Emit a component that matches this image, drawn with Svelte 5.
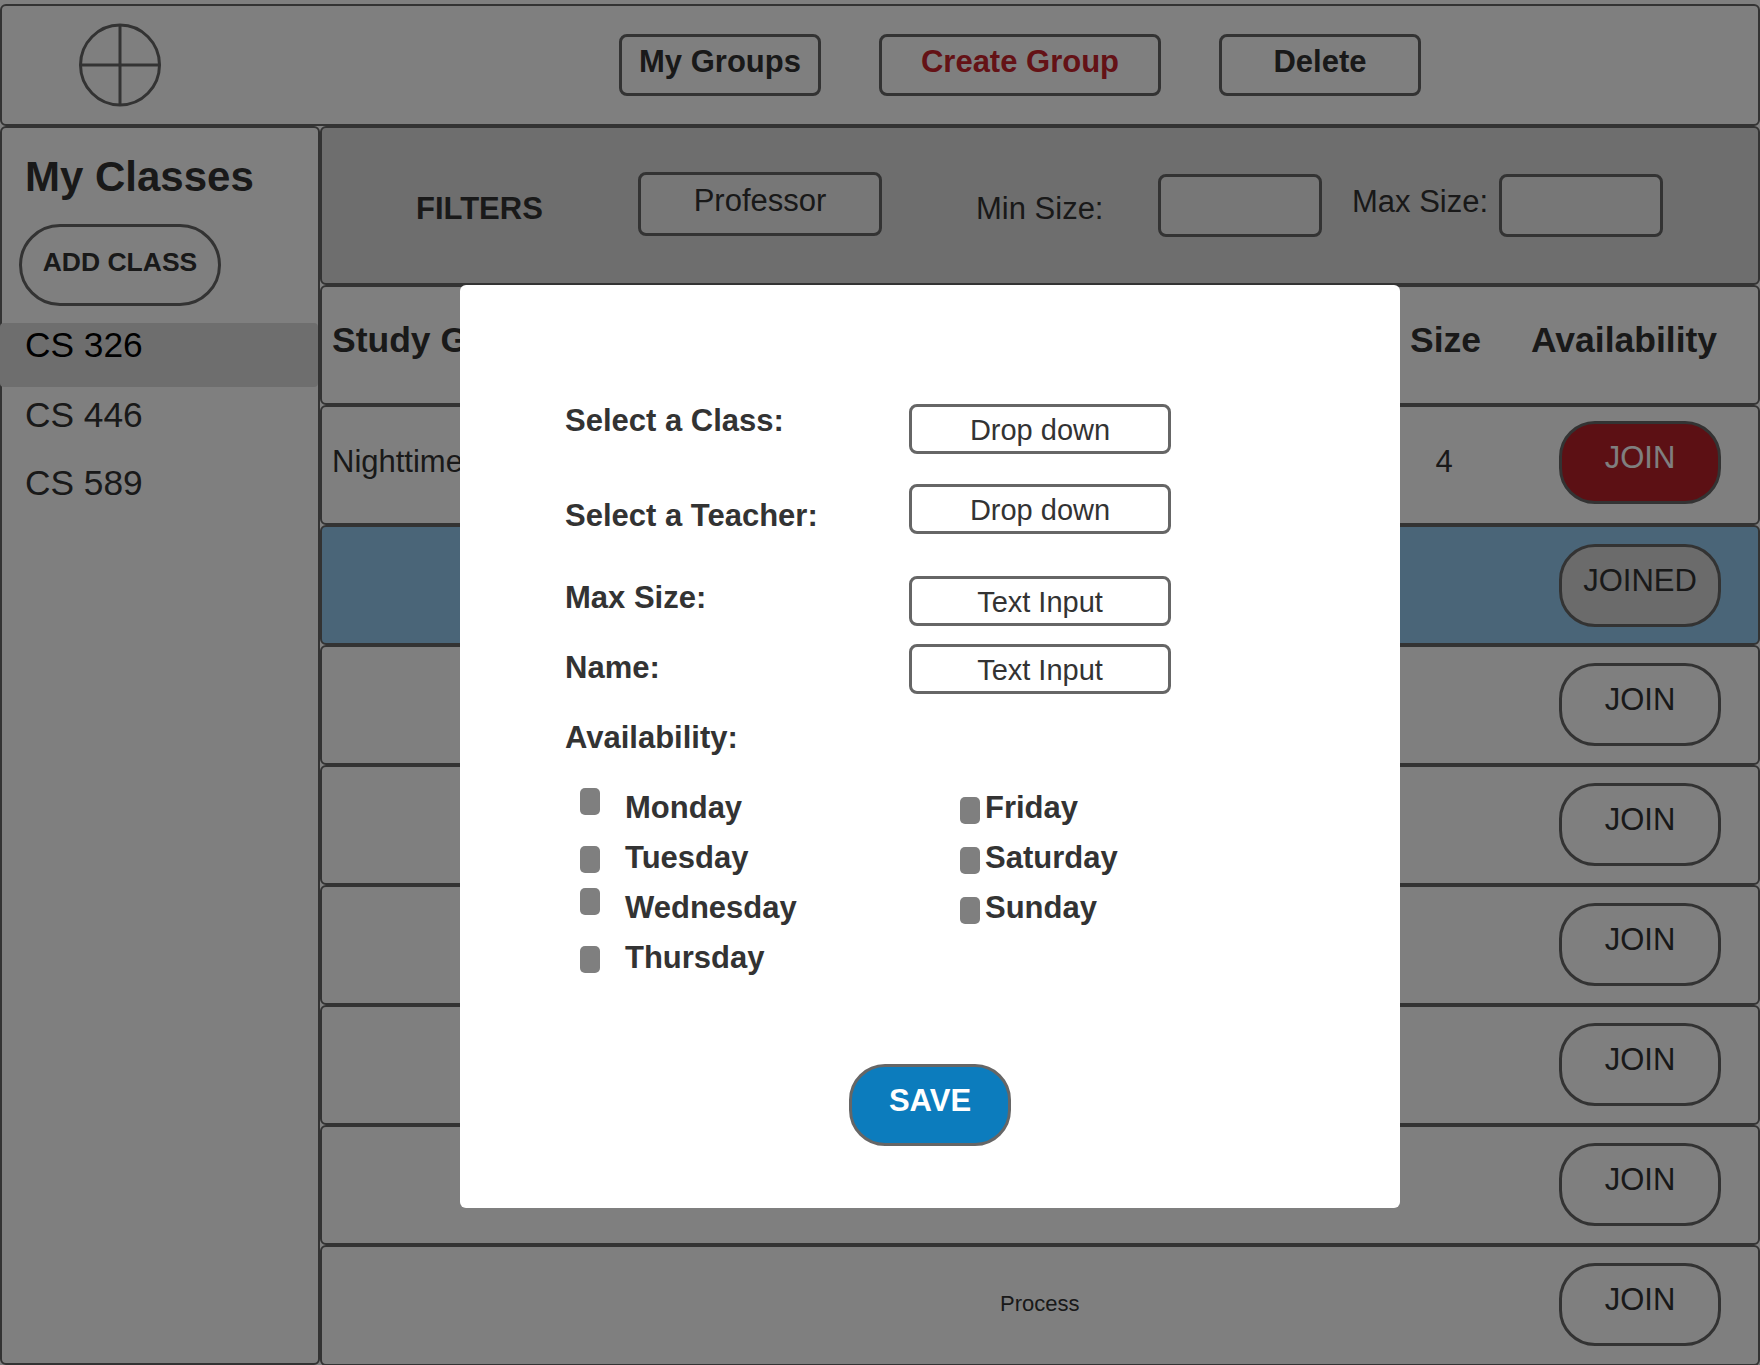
<script>
  const rows = [
    { name: 'Nighttime', size: '4', btn: 'JOIN', kind: 'first' },
    { name: '', size: '', btn: 'JOINED', kind: 'joined' },
    { name: '', size: '', btn: 'JOIN', kind: '' },
    { name: '', size: '', btn: 'JOIN', kind: '' },
    { name: '', size: '', btn: 'JOIN', kind: '' },
    { name: '', size: '', btn: 'JOIN', kind: '' },
    { name: '', size: '', btn: 'JOIN', kind: '' },
    { name: 'Process', size: '', btn: 'JOIN', kind: 'last' }
  ];
  const leftDays = [
    { d: 'Monday', c: 'up' },
    { d: 'Tuesday', c: 'down' },
    { d: 'Wednesday', c: 'up' },
    { d: 'Thursday', c: 'down' }
  ];
  const rightDays = ['Friday', 'Saturday', 'Sunday'];
</script>

<div class="page">
  <header class="topbar box">
    <svg class="logo" viewBox="0 0 82 84" width="82" height="84" aria-hidden="true">
      <ellipse cx="41" cy="42" rx="39.5" ry="40" fill="none" stroke="#666" stroke-width="3" />
      <path d="M41 2V82M2 42H80" fill="none" stroke="#666" stroke-width="3" />
    </svg>
    <div class="nav">
      <button class="navbtn w202">My Groups</button>
      <button class="navbtn w282 red">Create Group</button>
      <button class="navbtn w202">Delete</button>
    </div>
  </header>

  <div class="body">
    <aside class="sidebar box">
      <h1>My Classes</h1>
      <button class="add">ADD CLASS</button>
      <ul>
        <li class="active">CS 326</li>
        <li class="c2">CS 446</li>
        <li class="c3">CS 589</li>
      </ul>
    </aside>

    <main>
      <section class="filters box">
        <strong class="flabel">FILTERS</strong>
        <div class="prof">Professor</div>
        <span class="min">Min Size:</span>
        <div class="num"></div>
        <span class="max">Max Size:</span>
        <div class="num"></div>
      </section>

      <div class="head box row">
        <span class="name">Study Group</span>
        <span class="size">Size</span>
        <span class="avail">Availability</span>
      </div>

      {#each rows as r}
        <div class="row box item {r.kind}">
          <span class="name">{r.name}</span>
          <span class="size">{r.size}</span>
          <button class="join">{r.btn}</button>
        </div>
      {/each}
    </main>
  </div>

  <div class="overlay"></div>

  <div class="modal">
    <div class="field f1">
      <label>Select a Class:</label>
      <div class="input">Drop down</div>
    </div>
    <div class="field f2">
      <label>Select a Teacher:</label>
      <div class="input">Drop down</div>
    </div>
    <div class="field f3">
      <label>Max Size:</label>
      <div class="input">Text Input</div>
    </div>
    <div class="field f4">
      <label>Name:</label>
      <div class="input">Text Input</div>
    </div>
    <div class="availlabel">Availability:</div>
    <div class="days">
      <div class="col left">
        {#each leftDays as x}
          <div class="day"><i class="check {x.c}"></i><b>{x.d}</b></div>
        {/each}
      </div>
      <div class="col right">
        {#each rightDays as d}
          <div class="day"><i class="check low"></i><b>{d}</b></div>
        {/each}
      </div>
    </div>
    <button class="save">SAVE</button>
  </div>
</div>

<style>
  :global(body) {
    margin: 0;
    background: #fff;
  }
  .page {
    position: relative;
    width: 1760px;
    height: 1365px;
    overflow: hidden;
    padding-top: 4px;
    box-sizing: border-box;
    font-family: "Liberation Sans", Arial, sans-serif;
    color: #333;
  }
  .box {
    border: 2px solid #666;
    border-radius: 6px;
    box-sizing: border-box;
    background: #fff;
  }
  button {
    font-family: inherit;
    cursor: default;
  }
  .topbar {
    height: 122px;
    display: flex;
    align-items: center;
    padding-left: 77px;
  }
  .logo {
    flex: none;
  }
  .nav {
    display: flex;
    gap: 58px;
    margin-left: 458px;
    margin-top: -1px;
  }
  .navbtn {
    height: 62px;
    border: 3px solid #666;
    border-radius: 8px;
    background: transparent;
    color: #333;
    font-size: 31px;
    font-weight: 700;
    padding: 0 0 6px;
    line-height: 1;
  }
  .w202 { width: 202px; }
  .w282 { width: 282px; }
  .red { color: #c8252c; }

  .body {
    display: flex;
    height: 1239px;
  }
  .sidebar {
    width: 320px;
    flex: none;
    height: 100%;
  }
  h1 {
    margin: 0;
    padding: 24px 0 0 23px;
    font-size: 42px;
    line-height: 50px;
    font-weight: 700;
  }
  .add {
    display: block;
    width: 202px;
    height: 82px;
    margin: 22px 0 0 17px;
    border: 3px solid #666;
    border-radius: 41px;
    background: transparent;
    color: #333;
    font-size: 26.5px;
    font-weight: 700;
    padding: 0 0 6px;
  }
  ul {
    list-style: none;
    margin: 17px 0 0;
    padding: 0;
    font-size: 35.3px;
    line-height: 40px;
  }
  li {
    padding-left: 23px;
  }
  li.active {
    height: 64px;
    box-sizing: border-box;
    background: #ddd;
    border-radius: 4px;
    color: #000;
    margin-left: -2px;
    padding-left: 25px;
    width: 318px;
    line-height: 44px;
  }
  li.c2 { margin-top: 8px; }
  li.c3 { margin-top: 28px; }

  main {
    flex: 1;
    min-width: 0;
  }
  .filters {
    height: 159px;
    background: #ddd;
    display: flex;
    align-items: center;
    font-size: 31px;
  }
  .flabel {
    margin-left: 94px;
    width: 222px;
    flex: none;
    padding-top: 7px;
    font-size: 31px;
  }
  .prof {
    width: 244px;
    height: 64px;
    box-sizing: border-box;
    border: 3px solid #666;
    border-radius: 8px;
    text-align: center;
    line-height: 52px;
    background: #eee;
    margin-top: -3px;
    flex: none;
  }
  .min {
    margin-left: 94px;
    width: 182px;
    flex: none;
    padding-top: 7px;
  }
  .max {
    margin-left: 30px;
    width: 147px;
    flex: none;
    margin-top: -8px;
  }
  .num {
    width: 164px;
    height: 63px;
    box-sizing: border-box;
    border: 3px solid #666;
    border-radius: 8px;
    background: #eee;
    flex: none;
    margin-top: -1px;
  }

  .row {
    height: 120px;
    display: grid;
    grid-template-columns: 1fr 100px 162px;
    column-gap: 65px;
    padding: 0 37px 0 10px;
    align-items: center;
    font-size: 31px;
  }
  .head {
    font-size: 35.5px;
    font-weight: 700;
  }
  .head .size,
  .head .avail,
  .head .name {
    margin-top: -10px;
    white-space: nowrap;
  }
  .head .avail {
    margin-left: -28px;
  }
  .head .size {
    padding-left: 3px;
  }
  .size {
    text-align: center;
  }
  .item .size {
    margin-top: -6px;
  }
  .item.first .name {
    margin-top: -6px;
  }
  .join {
    align-self: start;
    margin-top: 16px;
    width: 162px;
    height: 83px;
    border: 3px solid #666;
    border-radius: 36px;
    background: transparent;
    color: #333;
    font-size: 31px;
    font-family: inherit;
    padding: 0 0 10px;
  }
  .first .join {
    margin-top: 14px;
    background: #b82028;
    color: #fff;
  }
  .joined .join {
    margin-top: 17px;
    background: #d6d6d6;
  }
  .joined {
    background: #94cbf0;
  }
  .last {
    height: 121px;
  }
  .last .name {
    font-size: 22px;
    margin-left: 668px;
    margin-top: -4px;
  }

  .overlay {
    position: absolute;
    inset: 0;
    background: rgba(0, 0, 0, 0.5);
  }
  .modal {
    position: absolute;
    left: 460px;
    top: 285px;
    width: 940px;
    height: 923px;
    box-sizing: border-box;
    background: #fff;
    border-radius: 6px;
    padding: 119px 0 0 105px;
    font-size: 31px;
  }
  .field {
    display: grid;
    grid-template-columns: 344px 262px;
    align-items: center;
    height: 50px;
  }
  .field label {
    font-weight: 700;
  }
  .f2 { margin-top: 30px; }
  .f3 { margin-top: 42px; }
  .f4 { margin-top: 18px; }
  .f1 label { margin-top: -16px; }
  .f2 label { margin-top: 14px; }
  .f3 label { margin-top: -6px; }
  .f4 label { margin-top: -2px; }
  .input {
    height: 50px;
    box-sizing: border-box;
    border: 3px solid #666;
    border-radius: 8px;
    font-size: 29px;
    line-height: 47px;
    text-align: center;
  }
  .availlabel {
    font-weight: 700;
    margin-top: 26px;
    line-height: 36px;
  }
  .days {
    display: flex;
    margin-top: 27px;
  }
  .col {
    flex: none;
  }
  .left {
    width: 395px;
    padding-left: 15px;
    box-sizing: border-box;
  }
  .day {
    display: flex;
    align-items: center;
    height: 50px;
    font-weight: 700;
  }
  .day b {
    font-weight: 700;
  }
  .left .day { gap: 25px; }
  .right .day { gap: 5px; }
  .check {
    display: block;
    width: 20px;
    height: 27px;
    background: #7f7f7f;
    border-radius: 5px;
    flex: none;
  }
  .check.up { margin-top: -13px; }
  .check.down { margin-top: 3px; }
  .check.low { margin-top: 5px; }
  .save {
    display: block;
    width: 162px;
    height: 82px;
    margin: 81px 0 0 284px;
    border: 3px solid #666;
    border-radius: 36px;
    background: #0c7cbd;
    color: #fff;
    font-size: 31px;
    font-weight: 700;
    padding: 0 0 9px;
  }
</style>
